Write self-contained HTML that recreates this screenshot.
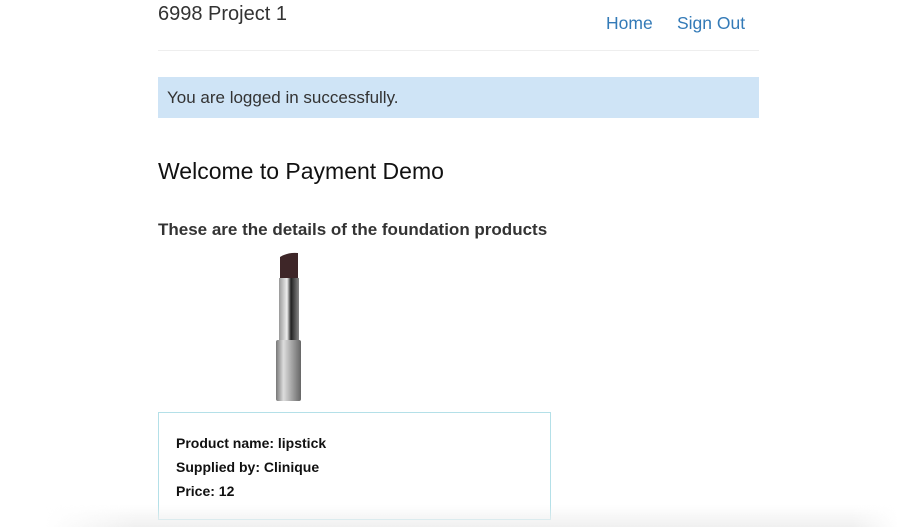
<!DOCTYPE html>
<html><head><style>
body{margin:0;width:898px;height:527px;overflow:hidden;background:#fff;font-family:"Liberation Sans",sans-serif;color:#333;position:relative}
.t{position:absolute;white-space:nowrap}
</style></head><body>
<div class="t" style="left:158px;top:3px;font-size:20px;">6998 Project 1</div>
<div class="t" style="left:606px;top:13px;font-size:17.5px;color:#337ab7">Home</div>
<div class="t" style="left:677px;top:13px;font-size:17.5px;color:#337ab7">Sign Out</div>
<div style="position:absolute;left:158px;top:50px;width:601px;height:1px;background:#eee"></div>
<div style="position:absolute;left:158px;top:77px;width:601px;height:41px;background:#cfe4f6"></div>
<div class="t" style="left:167px;top:88px;font-size:17px;">You are logged in successfully.</div>
<div class="t" style="left:158px;top:158px;font-size:23px;color:#111">Welcome to Payment Demo</div>
<div class="t" style="left:158px;top:220px;font-size:17px;font-weight:bold;">These are the details of the foundation products</div>
<svg style="position:absolute;left:270px;top:250px" width="40" height="155">
<defs><linearGradient id="g" x1="0" x2="1"><stop offset="0" stop-color="#777"/><stop offset=".3" stop-color="#ddd"/><stop offset=".6" stop-color="#aaa"/><stop offset="1" stop-color="#666"/></linearGradient>
<linearGradient id="h" x1="0" x2="1"><stop offset="0" stop-color="#999"/><stop offset=".4" stop-color="#eee"/><stop offset=".6" stop-color="#222"/><stop offset="1" stop-color="#888"/></linearGradient></defs>
<path d="M10 7 Q18 2 28 3 L28 29 L10 29 Z" fill="#3e2628"/>
<rect x="9" y="28" width="20" height="62" fill="url(#h)"/>
<rect x="6" y="90" width="25" height="61" rx="2" fill="url(#g)"/>
</svg>
<div style="position:absolute;left:158px;top:412px;width:391px;height:106px;border:1px solid #b4e0e8"></div>
<div class="t" style="left:176px;top:435px;font-size:14px;font-weight:bold;color:#111">Product name: lipstick</div>
<div class="t" style="left:176px;top:459px;font-size:14px;font-weight:bold;color:#111">Supplied by: Clinique</div>
<div class="t" style="left:176px;top:483px;font-size:14px;font-weight:bold;color:#111">Price: 12</div>
<div style="position:absolute;left:0;right:0;top:505px;height:22px;background:linear-gradient(#fff0,#f0f0f0);-webkit-mask:linear-gradient(90deg,transparent 5%,#000 15%,#000 95%,transparent);mask:linear-gradient(90deg,transparent 5%,#000 15%,#000 95%,transparent)"></div>
</body></html>
